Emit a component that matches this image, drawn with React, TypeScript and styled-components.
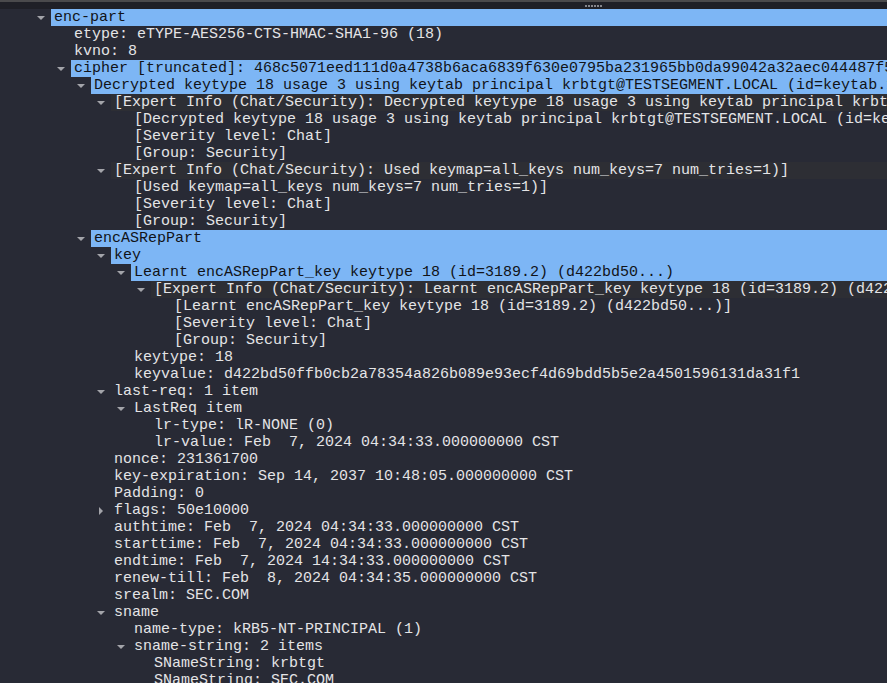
import React from "react";
import styled, { createGlobalStyle } from "styled-components";

const Global = createGlobalStyle`
  html, body { margin: 0; padding: 0; background: #282a35; overflow: hidden; }
  body { width: 887px; height: 683px; }
`;

type Arrow = "down" | "right" | null;
type Kind = "sel" | "expert" | "plain";
type Item = { l: number; t: string; a?: Arrow; k?: Kind };

const items: Item[] = [
  { l: 0, t: "enc-part", a: "down", k: "sel" },
  { l: 1, t: "etype: eTYPE-AES256-CTS-HMAC-SHA1-96 (18)" },
  { l: 1, t: "kvno: 8" },
  { l: 1, t: "cipher [truncated]: 468c5071eed111d0a4738b6aca6839f630e0795ba231965bb0da99042a32aec044487f5", a: "down", k: "sel" },
  { l: 2, t: "Decrypted keytype 18 usage 3 using keytab principal krbtgt@TESTSEGMENT.LOCAL (id=keytab.1)", a: "down", k: "sel" },
  { l: 3, t: "[Expert Info (Chat/Security): Decrypted keytype 18 usage 3 using keytab principal krbtgt@TESTSEGMENT.LOCAL", a: "down", k: "expert" },
  { l: 4, t: "[Decrypted keytype 18 usage 3 using keytab principal krbtgt@TESTSEGMENT.LOCAL (id=keytab.1)]" },
  { l: 4, t: "[Severity level: Chat]" },
  { l: 4, t: "[Group: Security]" },
  { l: 3, t: "[Expert Info (Chat/Security): Used keymap=all_keys num_keys=7 num_tries=1)]", a: "down", k: "expert" },
  { l: 4, t: "[Used keymap=all_keys num_keys=7 num_tries=1)]" },
  { l: 4, t: "[Severity level: Chat]" },
  { l: 4, t: "[Group: Security]" },
  { l: 2, t: "encASRepPart", a: "down", k: "sel" },
  { l: 3, t: "key", a: "down", k: "sel" },
  { l: 4, t: "Learnt encASRepPart_key keytype 18 (id=3189.2) (d422bd50...)", a: "down", k: "sel" },
  { l: 5, t: "[Expert Info (Chat/Security): Learnt encASRepPart_key keytype 18 (id=3189.2) (d422bd50...)]", a: "down", k: "expert" },
  { l: 6, t: "[Learnt encASRepPart_key keytype 18 (id=3189.2) (d422bd50...)]" },
  { l: 6, t: "[Severity level: Chat]" },
  { l: 6, t: "[Group: Security]" },
  { l: 4, t: "keytype: 18" },
  { l: 4, t: "keyvalue: d422bd50ffb0cb2a78354a826b089e93ecf4d69bdd5b5e2a4501596131da31f1" },
  { l: 3, t: "last-req: 1 item", a: "down" },
  { l: 4, t: "LastReq item", a: "down" },
  { l: 5, t: "lr-type: lR-NONE (0)" },
  { l: 5, t: "lr-value: Feb  7, 2024 04:34:33.000000000 CST" },
  { l: 3, t: "nonce: 231361700" },
  { l: 3, t: "key-expiration: Sep 14, 2037 10:48:05.000000000 CST" },
  { l: 3, t: "Padding: 0" },
  { l: 3, t: "flags: 50e10000", a: "right" },
  { l: 3, t: "authtime: Feb  7, 2024 04:34:33.000000000 CST" },
  { l: 3, t: "starttime: Feb  7, 2024 04:34:33.000000000 CST" },
  { l: 3, t: "endtime: Feb  7, 2024 14:34:33.000000000 CST" },
  { l: 3, t: "renew-till: Feb  8, 2024 04:34:35.000000000 CST" },
  { l: 3, t: "srealm: SEC.COM" },
  { l: 3, t: "sname", a: "down" },
  { l: 4, t: "name-type: kRB5-NT-PRINCIPAL (1)" },
  { l: 4, t: "sname-string: 2 items", a: "down" },
  { l: 5, t: "SNameString: krbtgt" },
  { l: 5, t: "SNameString: SEC.COM" },
];

const Pane = styled.div`
  width: 887px;
  height: 683px;
  display: flex;
  flex-direction: column;
  overflow: hidden;
  background: #282a35;
`;

const Splitter = styled.div`
  flex: none;
  height: 7px;
  border-top: 2px solid #4a4a4c;
  background: #1f2027;
  display: flex;
  justify-content: center;
  align-items: center;
  padding-left: 299px;
`;

const Grip = styled.div`
  display: flex;
  gap: 1px;
`;

const Dot = styled.span`
  width: 2px;
  height: 2px;
  background: #85868c;
`;

const Tree = styled.div`
  display: flex;
  flex-direction: column;
`;

const Row = styled.div<{ $level: number }>`
  flex: none;
  height: 17px;
  display: flex;
  align-items: stretch;
  padding-left: ${(p) => 33 + p.$level * 20}px;
`;

const Toggle = styled.div`
  flex: none;
  width: 18px;
  display: flex;
  align-items: center;
  justify-content: center;
  padding-right: 2px;
  box-sizing: border-box;
`;

const Down = styled.span`
  width: 0;
  height: 0;
  border-left: 4px solid transparent;
  border-right: 4px solid transparent;
  border-top: 4px solid #a3a4aa;
`;

const Right = styled.span`
  width: 0;
  height: 0;
  border-top: 4px solid transparent;
  border-bottom: 4px solid transparent;
  border-left: 4px solid #a3a4aa;
`;

const Label = styled.div<{ $kind: Kind }>`
  flex: 1;
  min-width: 0;
  padding-left: 3px;
  font-family: "Liberation Mono", "DejaVu Sans Mono", monospace;
  font-size: 15px;
  line-height: 17px;
  white-space: pre;
  overflow: hidden;
  color: ${(p) => (p.$kind === "sel" ? "#111318" : "#e4e4e6")};
  background: ${(p) =>
    p.$kind === "sel" ? "#7db6f5" : p.$kind === "expert" ? "#2d2e34" : "transparent"};
`;

export default function App() {
  return (
    <Pane>
      <Global />
      <Splitter>
        <Grip>
          {Array.from({ length: 6 }).map((_, i) => (
            <Dot key={i} />
          ))}
        </Grip>
      </Splitter>
      <Tree>
        {items.map((it, i) => (
          <Row key={i} $level={it.l}>
            <Toggle>{it.a === "down" ? <Down /> : it.a === "right" ? <Right /> : null}</Toggle>
            <Label $kind={it.k ?? "plain"}>{it.t}</Label>
          </Row>
        ))}
      </Tree>
    </Pane>
  );
}
